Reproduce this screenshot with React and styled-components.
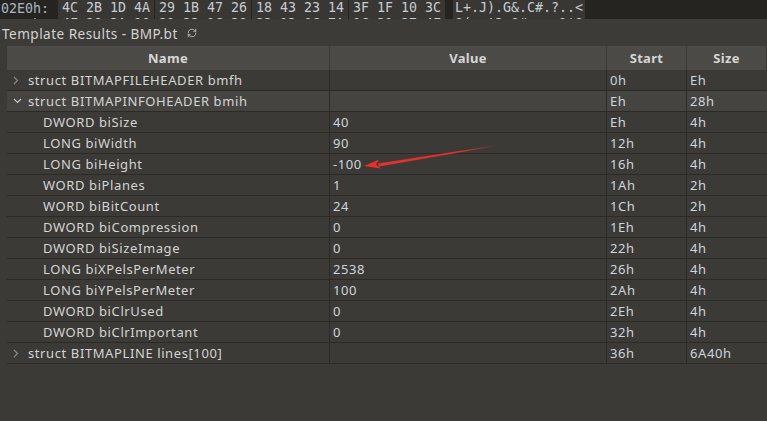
import React from "react";
import styled, { createGlobalStyle } from "styled-components";
import { RefreshCw } from "lucide-react";

const GlobalStyle = createGlobalStyle`
  html, body {
    margin: 0;
    padding: 0;
    background: #3b3a36;
    overflow: hidden;
  }
  * { box-sizing: border-box; }
`;

const hexRows = [
  {
    addr: "02E0h:",
    groups: ["4C 2B 1D 4A", "29 1B 47 26", "18 43 23 14", "3F 1F 10 3C"],
    ascii: "L+.J).G&.C#.?..<",
  },
  {
    addr: "02F0h:",
    groups: ["4F 28 3A 10", "21 33 1C 38", "23 13 0C 7A", "1C 31 27 4F"],
    ascii: "O(:.!3.8#..z.1'O",
  },
];

const rows = [
  { name: "struct BITMAPFILEHEADER bmfh", value: "", start: "0h", size: "Eh", chevron: "closed" },
  { name: "struct BITMAPINFOHEADER bmih", value: "", start: "Eh", size: "28h", chevron: "open", active: true },
  { name: "DWORD biSize", value: "40", start: "Eh", size: "4h", child: true },
  { name: "LONG biWidth", value: "90", start: "12h", size: "4h", child: true },
  { name: "LONG biHeight", value: "-100", start: "16h", size: "4h", child: true },
  { name: "WORD biPlanes", value: "1", start: "1Ah", size: "2h", child: true },
  { name: "WORD biBitCount", value: "24", start: "1Ch", size: "2h", child: true },
  { name: "DWORD biCompression", value: "0", start: "1Eh", size: "4h", child: true },
  { name: "DWORD biSizeImage", value: "0", start: "22h", size: "4h", child: true },
  { name: "LONG biXPelsPerMeter", value: "2538", start: "26h", size: "4h", child: true },
  { name: "LONG biYPelsPerMeter", value: "100", start: "2Ah", size: "4h", child: true },
  { name: "DWORD biClrUsed", value: "0", start: "2Eh", size: "4h", child: true },
  { name: "DWORD biClrImportant", value: "0", start: "32h", size: "4h", child: true },
  { name: "struct BITMAPLINE lines[100]", value: "", start: "36h", size: "6A40h", chevron: "closed" },
];

export default function App() {
  return (
    <Page>
      <GlobalStyle />
      <HexStrip>
        {hexRows.map((r) => (
          <HexLine key={r.addr}>
            <Addr>{r.addr}</Addr>
            <HexCells>
              {r.groups.map((g, i) => (
                <HexGroup key={i}>{g}</HexGroup>
              ))}
            </HexCells>
            <Ascii>{r.ascii}</Ascii>
          </HexLine>
        ))}
      </HexStrip>

      <TitleBar>
        Template Results - BMP.bt
        <RefreshCw size={10} strokeWidth={2.2} color="#b8b8b8" />
      </TitleBar>

      <TableWrap>
        <Grid>
          <HeadCell>Name</HeadCell>
          <HeadCell>Value</HeadCell>
          <HeadCell>Start</HeadCell>
          <HeadCell>Size</HeadCell>
          {rows.map((r) => (
            <Row key={r.name} $active={r.active}>
              <NameCell $child={r.child}>
                {r.chevron && (
                  <Chevron>
                    {r.chevron === "open" ? (
                      <svg width="9" height="6" viewBox="0 0 9 6">
                        <path d="M1 1 L4.5 4.5 L8 1" fill="none" stroke="#c4c4c4" strokeWidth="1.2" />
                      </svg>
                    ) : (
                      <svg width="6" height="9" viewBox="0 0 6 9">
                        <path d="M1 1 L4.5 4.5 L1 8" fill="none" stroke="#8c8c8c" strokeWidth="1.1" />
                      </svg>
                    )}
                  </Chevron>
                )}
                {r.name}
              </NameCell>
              <Cell>{r.value}</Cell>
              <Cell>{r.start}</Cell>
              <Cell>{r.size}</Cell>
            </Row>
          ))}
        </Grid>
        <Arrow width="140" height="30" viewBox="0 0 140 30">
          <defs>
            <linearGradient id="fade" x1="0" y1="0" x2="1" y2="0">
              <stop offset="0" stopColor="#e8302c" />
              <stop offset="0.7" stopColor="#e0302c" />
              <stop offset="1" stopColor="#e0302c" stopOpacity="0.2" />
            </linearGradient>
          </defs>
          <path d="M16 21.5 L133 3.4 L133 4.2 L17 24.5 Z" fill="url(#fade)" />
          <path d="M2 24 L17 17.5 L14 22.5 L19 26.5 Z" fill="#ec2f2b" />
        </Arrow>
      </TableWrap>
    </Page>
  );
}

const Page = styled.div`
  width: 767px;
  height: 421px;
  display: flex;
  flex-direction: column;
  background: #3b3a36;
  font-family: "Noto Sans", "Open Sans", sans-serif;
`;

const HexStrip = styled.div`
  height: 19px;
  overflow: hidden;
  background: #252421;
  font-family: "DejaVu Sans Mono", "Liberation Mono", monospace;
  font-size: 13.3px;
`;

const HexLine = styled.div`
  display: flex;
  align-items: center;
  height: 16px;
  line-height: 15px;
  padding-left: 1px;
`;

const Addr = styled.span`
  width: 57px;
  color: #a9b6c4;
  white-space: pre;
`;

const HexCells = styled.div`
  display: flex;
  gap: 1px;
  background: #252421;
`;

const HexGroup = styled.span`
  width: 96px;
  padding-left: 4px;
  height: 16px;
  background: #383733;
  color: #c6ccd2;
  white-space: pre;
`;

const Ascii = styled.span`
  margin-left: 8px;
  padding: 0 2px;
  height: 16px;
  background: #383733;
  color: #c6ccd2;
  white-space: pre;
`;

const TitleBar = styled.div`
  height: 27px;
  display: flex;
  align-items: center;
  gap: 9px;
  padding-left: 2px;
  padding-top: 1px;
  color: #d2d2d2;
  font-size: 13.6px;
  letter-spacing: 0.45px;
  background: #3c3b37;
`;

const TableWrap = styled.div`
  position: relative;
  flex: 1;
  padding-left: 7px;
`;

const Grid = styled.div`
  display: grid;
  grid-template-columns: 323px 277px 80px 1fr;
`;

const HeadCell = styled.div`
  height: 24px;
  display: flex;
  align-items: center;
  justify-content: center;
  background: #4b4a47;
  color: #d6d6d6;
  font-weight: 700;
  font-size: 13px;
  letter-spacing: 0.3px;
  border-right: 1px solid #3a3936;
  &:last-of-type { border-right: none; }
`;

const Row = styled.div`
  display: contents;
  & > div {
    background: ${(p) => (p.$active ? "#454441" : "#3b3a36")};
  }
`;

const Cell = styled.div`
  height: 21px;
  display: flex;
  align-items: center;
  padding-left: 3px;
  border-bottom: 1px solid #2b2a27;
  border-right: 1px solid #2b2a27;
  color: #ced5dc;
  font-size: 13px;
  letter-spacing: 0.6px;
  white-space: nowrap;
  &:last-child { border-right: none; }
`;

const NameCell = styled(Cell)`
  padding-left: ${(p) => (p.$child ? "36px" : "6px")};
  color: #d4d4d4;
`;

const Chevron = styled.span`
  width: 15px;
  display: flex;
  align-items: center;
`;

const Arrow = styled.svg`
  position: absolute;
  left: 362px;
  top: 96px;
`;
